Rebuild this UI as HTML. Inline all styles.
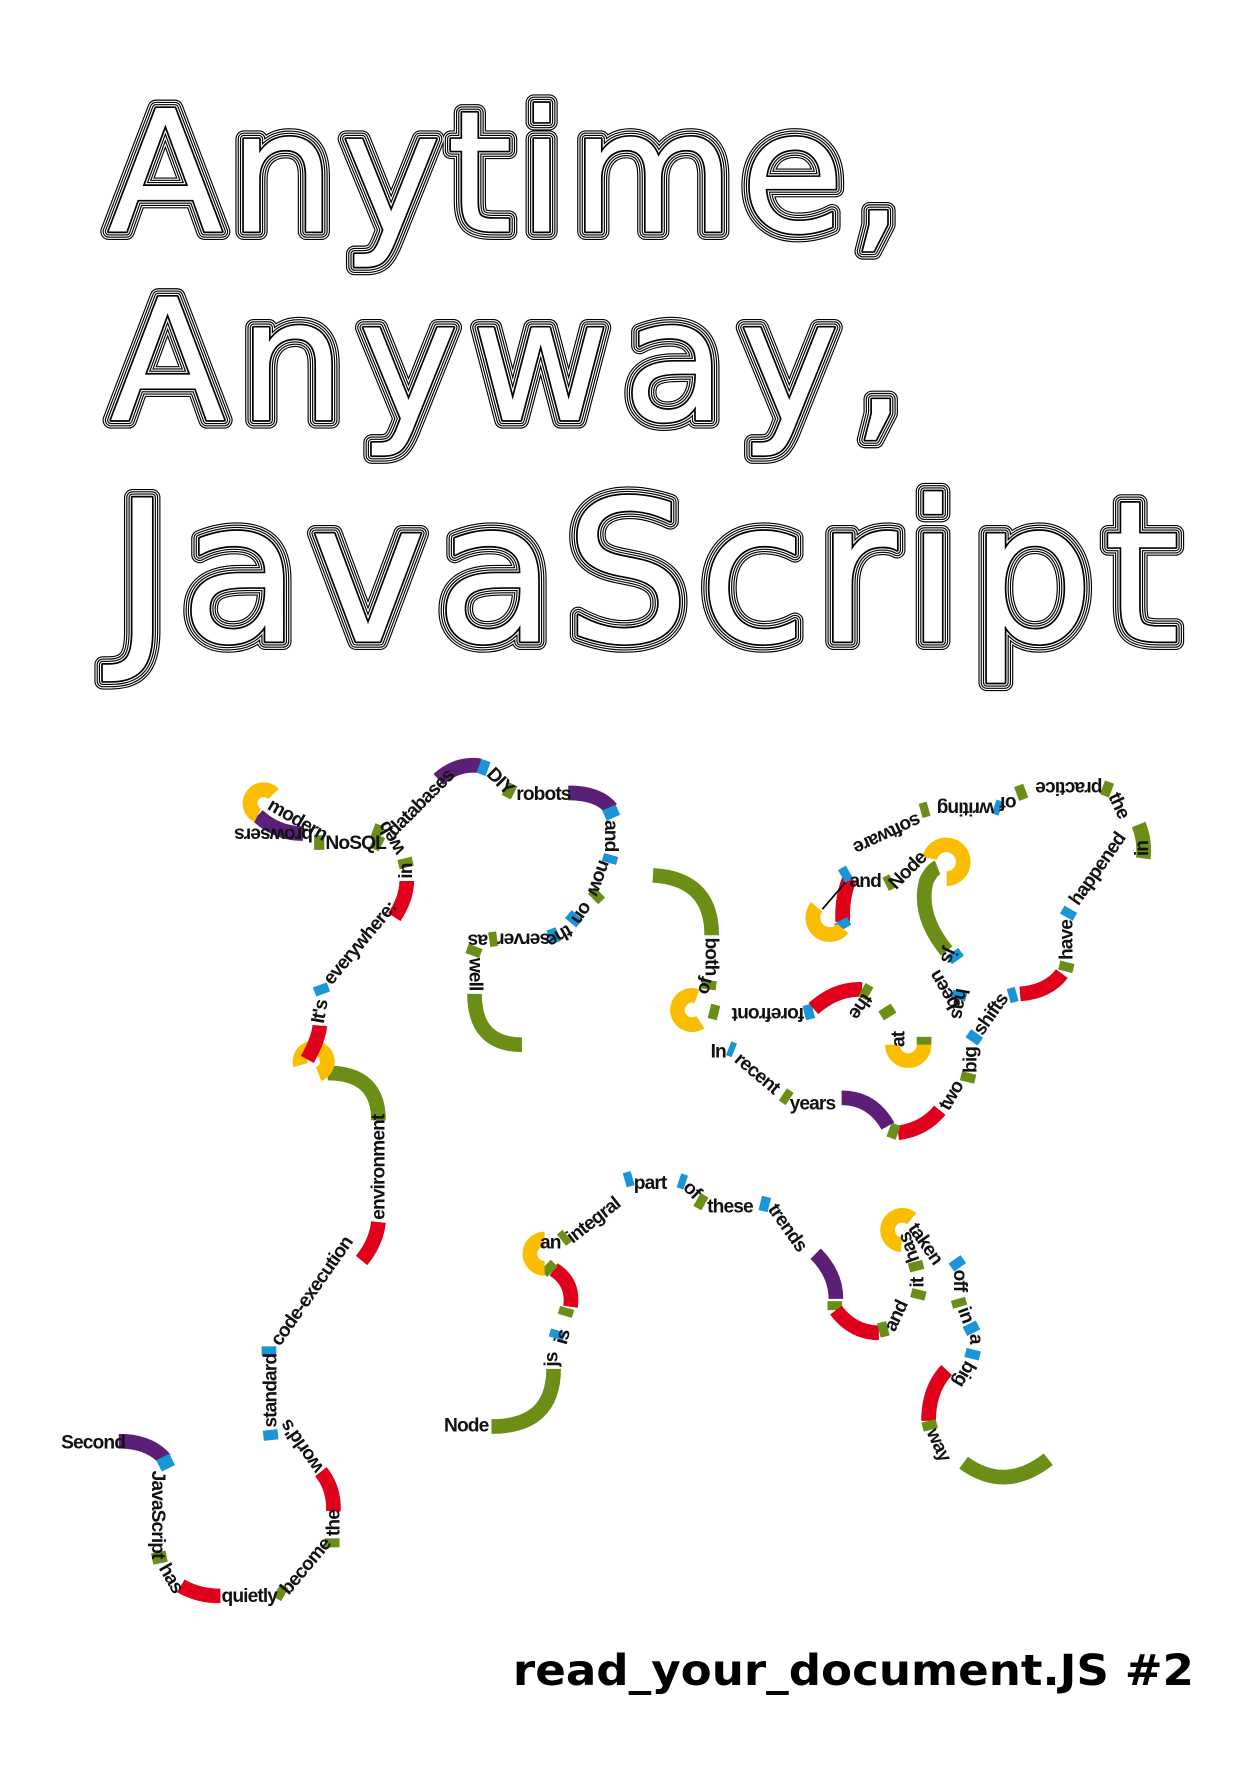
<!DOCTYPE html>
<html><head><meta charset="utf-8"><style>
html,body{margin:0;padding:0;background:#fff;width:1254px;height:1771px;overflow:hidden}
svg{display:block}
.w{font-family:"Liberation Sans Narrow","Liberation Sans",sans-serif;font-size:17px;font-weight:bold;letter-spacing:-0.8px;fill:#111;dominant-baseline:middle}
.s{fill:none;stroke-width:13}
.P{stroke:#5b1f78}.Y{stroke:#fbbd00}.R{stroke:#e0001b}.G{stroke:#6a8e16}.B{stroke:#1a96d8}
.t{font-family:"DejaVu Sans","Liberation Sans",sans-serif;stroke-linejoin:round}
</style></head><body>
<svg width="1254" height="1771" viewBox="0 0 1110 1568" xmlns="http://www.w3.org/2000/svg">
<g class="t" font-size="150">
<text x="95" y="205" textLength="705" lengthAdjust="spacing" fill="none" stroke="#000" stroke-width="15">Anytime,</text>
<text x="95" y="205" textLength="705" lengthAdjust="spacing" fill="none" stroke="#fff" stroke-width="13">Anytime,</text>
<text x="95" y="205" textLength="705" lengthAdjust="spacing" fill="none" stroke="#000" stroke-width="11">Anytime,</text>
<text x="95" y="205" textLength="705" lengthAdjust="spacing" fill="none" stroke="#fff" stroke-width="9">Anytime,</text>
<text x="95" y="205" textLength="705" lengthAdjust="spacing" fill="none" stroke="#000" stroke-width="7">Anytime,</text>
<text x="95" y="205" textLength="705" lengthAdjust="spacing" fill="none" stroke="#fff" stroke-width="5">Anytime,</text>
<text x="95" y="205" textLength="705" lengthAdjust="spacing" fill="none" stroke="#000" stroke-width="3">Anytime,</text>
<text x="95" y="205" textLength="705" lengthAdjust="spacing" fill="#fff" stroke="none">Anytime,</text>

<text x="97" y="372" textLength="705" lengthAdjust="spacing" fill="none" stroke="#000" stroke-width="15">Anyway,</text>
<text x="97" y="372" textLength="705" lengthAdjust="spacing" fill="none" stroke="#fff" stroke-width="13">Anyway,</text>
<text x="97" y="372" textLength="705" lengthAdjust="spacing" fill="none" stroke="#000" stroke-width="11">Anyway,</text>
<text x="97" y="372" textLength="705" lengthAdjust="spacing" fill="none" stroke="#fff" stroke-width="9">Anyway,</text>
<text x="97" y="372" textLength="705" lengthAdjust="spacing" fill="none" stroke="#000" stroke-width="7">Anyway,</text>
<text x="97" y="372" textLength="705" lengthAdjust="spacing" fill="none" stroke="#fff" stroke-width="5">Anyway,</text>
<text x="97" y="372" textLength="705" lengthAdjust="spacing" fill="none" stroke="#000" stroke-width="3">Anyway,</text>
<text x="97" y="372" textLength="705" lengthAdjust="spacing" fill="#fff" stroke="none">Anyway,</text>
</g>
<g class="t" font-size="175">
<text x="100" y="568" textLength="945" lengthAdjust="spacing" fill="none" stroke="#000" stroke-width="15">JavaScript</text>
<text x="100" y="568" textLength="945" lengthAdjust="spacing" fill="none" stroke="#fff" stroke-width="13">JavaScript</text>
<text x="100" y="568" textLength="945" lengthAdjust="spacing" fill="none" stroke="#000" stroke-width="11">JavaScript</text>
<text x="100" y="568" textLength="945" lengthAdjust="spacing" fill="none" stroke="#fff" stroke-width="9">JavaScript</text>
<text x="100" y="568" textLength="945" lengthAdjust="spacing" fill="none" stroke="#000" stroke-width="7">JavaScript</text>
<text x="100" y="568" textLength="945" lengthAdjust="spacing" fill="none" stroke="#fff" stroke-width="5">JavaScript</text>
<text x="100" y="568" textLength="945" lengthAdjust="spacing" fill="none" stroke="#000" stroke-width="3">JavaScript</text>
<text x="100" y="568" textLength="945" lengthAdjust="spacing" fill="#fff" stroke="none">JavaScript</text>
</g>

<path class="s P" d="M105,1276 Q132,1276 146,1292"/>
<path class="s B" d="M144,1290 L149,1300"/>
<path class="s G" d="M140,1374 L142,1384"/>
<path class="s R" d="M160,1404 Q175,1413 195,1413"/>
<path class="s G" d="M245,1408 L252,1412"/>
<path class="s G" d="M294,1362 L294,1370"/>
<path class="s R" d="M295,1338 Q296,1318 284,1303"/>
<path class="s B" d="M239,1266 L240,1275"/>
<path class="s B" d="M238,1192 L238,1200"/>
<path class="s R" d="M320,1116 Q333,1100 335,1082"/>
<path class="s G" d="M335,992 Q335,950 290,950"/>
<path class="s Y" d="M282,951 A12,12 0 1 0 266,943"/>
<path class="s R" d="M272,938 Q282,920 283,908"/>
<path class="s B" d="M283,872 L286,880"/>
<path class="s R" d="M349,812 Q360,795 360,780"/>
<path class="s G" d="M358,760 L360,768"/>
<path class="s G" d="M330,744 L338,748"/>
<path class="s G" d="M278,746 L287,746"/>
<path class="s G" d="M330,735 L338,738"/>
<path class="s P" d="M228,722 Q245,738 268,738"/>
<path class="s Y" d="M228,722 A12,12 0 1 1 242,703"/>
<path class="s P" d="M388,690 Q405,675 425,678"/>
<path class="s B" d="M424,678 L432,681"/>
<path class="s G" d="M447,698 L455,702"/>
<path class="s P" d="M503,702 Q530,702 541,716"/>
<path class="s B" d="M539,715 L543,724"/>
<path class="s B" d="M541,757 L539,764"/>
<path class="s G" d="M531,790 L525,796"/>
<path class="s B" d="M511,810 L505,817"/>
<path class="s B" d="M494,827 L486,830"/>
<path class="s G" d="M440,831 L433,832"/>
<path class="s G" d="M421,838 L418,846"/>
<path class="s G" d="M420,880 Q420,925 462,925"/>
<text class="w" x="54" y="1278">Second</text>
<text class="w" transform="translate(139,1302) rotate(90)">JavaScript</text>
<text class="w" transform="translate(144,1386) rotate(60)">has</text>
<text class="w" x="196" y="1414">quietly</text>
<text class="w" transform="translate(252,1410) rotate(-50)">become</text>
<text class="w" transform="translate(296,1360) rotate(-90)">the</text>
<text class="w" transform="translate(283,1302) rotate(235)">world's</text>
<text class="w" transform="translate(240,1264) rotate(-90)">standard</text>
<text class="w" transform="translate(244,1190) rotate(-55)">code-execution</text>
<text class="w" transform="translate(336,1080) rotate(-90)">environment</text>
<text class="w" transform="translate(282,906) rotate(-80)">It's</text>
<text class="w" transform="translate(290,870) rotate(-50)">everywhere:</text>
<text class="w" transform="translate(360,778) rotate(-90)">in</text>
<text class="w" transform="translate(355,755) rotate(-120)">web</text>
<text class="w" x="288" y="747">NoSQL</text>
<text class="w" transform="translate(277,738) rotate(180)">browsers</text>
<text class="w" transform="translate(238,712) rotate(30)">modern</text>
<text class="w" transform="translate(346,738) rotate(-45)">databases</text>
<text class="w" transform="translate(433,683) rotate(45)">DIY</text>
<text class="w" x="457" y="704">robots</text>
<text class="w" transform="translate(540,726) rotate(90)">and</text>
<text class="w" transform="translate(535,762) rotate(110)">now</text>
<text class="w" transform="translate(520,800) rotate(125)">on</text>
<text class="w" transform="translate(505,822) rotate(150)">the</text>
<text class="w" transform="translate(487,831) rotate(180)">server</text>
<text class="w" transform="translate(432,832) rotate(180)">as</text>
<text class="w" transform="translate(420,848) rotate(90)">well</text>

<path class="s G" d="M435,1263 Q490,1263 490,1212"/>
<path class="s B" d="M492,1185 L494,1178"/>
<path class="s G" d="M500,1165 L502,1158"/>
<path class="s R" d="M505,1157 Q508,1135 490,1124"/>
<path class="s G" d="M489,1126 L483,1120"/>
<path class="s Y" d="M482,1123 A13,13 0 1 1 482,1097"/>
<path class="s G" d="M497,1098 L502,1094"/>
<path class="s B" d="M553,1045 L560,1043"/>
<path class="s B" d="M601,1045 L607,1047"/>
<path class="s G" d="M617,1062 L624,1066"/>
<path class="s B" d="M673,1065 L681,1067"/>
<path class="s P" d="M722,1110 Q740,1128 740,1150"/>
<path class="s G" d="M739,1152 L739,1160"/>
<path class="s R" d="M740,1160 Q755,1180 778,1180"/>
<path class="s G" d="M778,1178 L786,1176"/>
<path class="s G" d="M812,1150 L814,1142"/>
<path class="s G" d="M812,1125 L810,1117"/>
<path class="s Y" d="M798,1102 A13,13 0 1 1 807,1079"/>
<path class="s B" d="M845,1115 L850,1122"/>
<path class="s G" d="M848,1150 L850,1157"/>
<path class="s B" d="M858,1172 L862,1180"/>
<path class="s B" d="M862,1195 L860,1203"/>
<path class="s R" d="M838,1213 Q822,1230 822,1258"/>
<path class="s G" d="M822,1258 L824,1266"/>
<path class="s G" d="M853,1295 Q890,1322 928,1292"/>
<text class="w" x="393" y="1263" font-size="19">Node</text>
<text class="w" transform="translate(489,1210) rotate(-90)">js</text>
<text class="w" transform="translate(497,1190) rotate(-75)">is</text>
<text class="w" x="478" y="1101">an</text>
<text class="w" transform="translate(504,1098) rotate(-38)">integral</text>
<text class="w" x="561" y="1048">part</text>
<text class="w" transform="translate(607,1049) rotate(45)">of</text>
<text class="w" x="626" y="1069">these</text>
<text class="w" transform="translate(683,1068) rotate(55)">trends</text>
<text class="w" transform="translate(788,1178) rotate(-65)">and</text>
<text class="w" transform="translate(813,1140) rotate(-90)">it</text>
<text class="w" transform="translate(810,1117) rotate(-110)">has</text>
<text class="w" transform="translate(807,1085) rotate(55)">taken</text>
<text class="w" transform="translate(849,1124) rotate(90)">off</text>
<text class="w" transform="translate(852,1158) rotate(70)">in</text>
<text class="w" transform="translate(863,1181) rotate(90)">a</text>
<text class="w" transform="translate(859,1206) rotate(120)">big</text>
<text class="w" transform="translate(824,1266) rotate(65)">way</text>

<path class="s G" d="M578,775 Q630,778 630,828"/>
<path class="s G" d="M628,868 L627,876"/>
<path class="s Y" d="M620,905 A13,13 0 1 1 617,882"/>
<path class="s G" d="M628,895 L636,897"/>
<path class="s B" d="M712,897 L720,895"/>
<path class="s R" d="M720,893 Q740,875 763,876"/>
<path class="s G" d="M763,876 L770,880"/>
<path class="s G" d="M783,892 L788,900"/>
<path class="s Y" d="M790,925 A14,14 0 0 0 818,925"/>
<path class="s G" d="M818,925 L818,918"/>
<path class="s B" d="M848,885 L850,878"/>
<path class="s B" d="M848,850 L843,843"/>
<path class="s G" d="M838,842 Q812,810 820,780 Q825,770 830,768"/>
<path class="s Y" d="M823,760 A15,15 0 1 1 838,778"/>
<path class="s G" d="M784,783 L790,780"/>
<path class="s R" d="M752,778 Q745,795 746,816"/>
<path class="s B" d="M744,815 L748,822"/>
<path class="s Y" d="M746,822 A13,13 0 1 1 723,803"/>
<line x1="728" y1="805" x2="752" y2="777" stroke="#000" stroke-width="1.5"/>
<path class="s B" d="M745,776 L752,772"/>
<path class="s G" d="M815,718 L822,716"/>
<path class="s B" d="M880,714 L886,716"/>
<path class="s G" d="M900,703 L908,700"/>
<path class="s G" d="M976,697 L984,700"/>
<path class="s G" d="M1008,730 Q1014,745 1012,760"/>
<path class="s B" d="M948,805 L944,812"/>
<path class="s G" d="M945,852 L943,860"/>
<path class="s R" d="M940,862 Q928,878 903,880"/>
<path class="s B" d="M900,880 L893,882"/>
<path class="s B" d="M865,915 L860,922"/>
<path class="s G" d="M858,950 L856,958"/>
<path class="s R" d="M832,983 Q818,1000 795,1003"/>
<path class="s G" d="M795,1003 L787,1000"/>
<path class="s P" d="M786,997 Q772,972 745,972"/>
<path class="s G" d="M699,973 L693,969"/>
<path class="s B" d="M650,930 L645,928"/>
<text class="w" transform="translate(629,830) rotate(90)">both</text>
<text class="w" transform="translate(622,880) rotate(-75)">of</text>
<text class="w" transform="translate(712,897) rotate(180)">forefront</text>
<text class="w" transform="translate(768,881) rotate(125)">the</text>
<text class="w" transform="translate(796,927) rotate(-90)">at</text>
<text class="w" transform="translate(846,892) rotate(-120)">been</text>
<text class="w" transform="translate(851,875) rotate(100)">has</text>
<text class="w" transform="translate(842,840) rotate(115)">js</text>
<text class="w" transform="translate(790,785) rotate(-45)">Node</text>
<text class="w" x="752" y="781">and</text>
<text class="w" transform="translate(814,724) rotate(155)">software</text>
<text class="w" transform="translate(880,715) rotate(180)">writing</text>
<text class="w" transform="translate(900,710) rotate(180)">of</text>
<text class="w" transform="translate(976,697) rotate(180)">practice</text>
<text class="w" transform="translate(985,703) rotate(65)">the</text>
<text class="w" transform="translate(1012,758) rotate(-90)">in</text>
<text class="w" transform="translate(951,800) rotate(-55)">happened</text>
<text class="w" transform="translate(945,850) rotate(-90)">have</text>
<text class="w" transform="translate(866,915) rotate(-55)">shifts</text>
<text class="w" transform="translate(860,950) rotate(-90)">big</text>
<text class="w" transform="translate(836,982) rotate(-60)">two</text>
<text class="w" x="699" y="978">years</text>
<text class="w" transform="translate(652,936) rotate(40)">recent</text>
<text class="w" x="629" y="932">In</text>

<text x="1057" y="1492" text-anchor="end" textLength="603" lengthAdjust="spacingAndGlyphs" font-family="DejaVu Sans, Liberation Sans, sans-serif" font-weight="bold" font-size="38" fill="#000">read_your_document.JS #2</text>
</svg>
</body></html>
